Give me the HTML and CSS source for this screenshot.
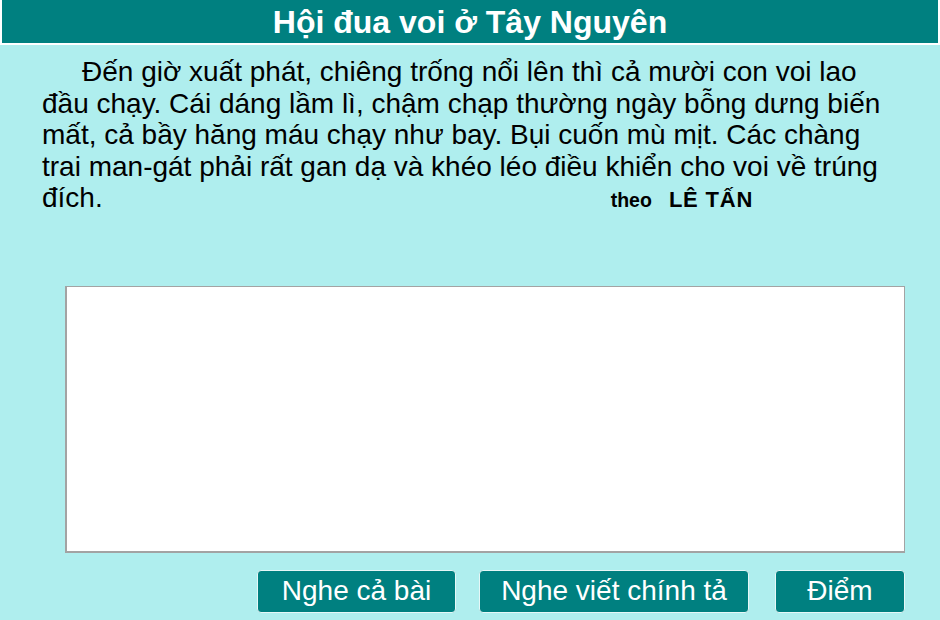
FILE: index.html
```html
<!DOCTYPE html>
<html lang="vi">
<head>
<meta charset="utf-8">
<title>Hội đua voi ở Tây Nguyên</title>
<link rel="stylesheet" href="styles.css">
</head>
<body>
  <header class="title-bar">
    <h1 class="title">Hội đua voi ở Tây Nguyên</h1>
  </header>

  <main class="lesson">
    <p class="passage">Đến giờ xuất phát, chiêng trống nổi lên thì cả mười con voi lao đầu chạy. Cái dáng lầm lì, chậm chạp thường ngày bỗng dưng biến mất, cả bầy hăng máu chạy như bay. Bụi cuốn mù mịt. Các chàng trai man-gát phải rất gan dạ và khéo léo điều khiển cho voi về trúng đích.<span class="author">theo</span><span class="author-name">LÊ TẤN</span></p>

    <textarea class="answer" aria-label="Bài viết"></textarea>

    <div class="actions">
      <button class="btn btn-all" type="button">Nghe cả bài</button>
      <button class="btn btn-dictate" type="button">Nghe viết chính tả</button>
      <button class="btn btn-score" type="button">Điểm</button>
    </div>
  </main>
</body>
</html>
```

FILE: styles.css
```css
html, body {
  margin: 0;
  padding: 0;
}

body {
  background: #afeeee;
  font-family: "Liberation Sans", Arial, sans-serif;
  color: #000;
  width: 940px;
  height: 620px;
  overflow: hidden;
}

/* Teal banner with the lesson title */
.title-bar {
  background: #008080;
  border: 2px solid #ffffff;
  border-top: none;
  height: 43px;
  display: flex;
  align-items: center;
  justify-content: center;
}

.title {
  margin: 0;
  color: #ffffff;
  font-size: 32px;
  font-weight: bold;
  line-height: 1;
}

.lesson {
  padding: 11px 0 0 42px;
}

.passage {
  margin: 0;
  width: 858px;
  font-size: 28px;
  line-height: 31.5px;
  text-indent: 40px;
}

.author,
.author-name {
  display: inline-block;
  font-weight: bold;
  text-indent: 0;
}

.author {
  font-size: 19.5px;
  margin-left: 508px;
}

.author-name {
  font-size: 22px;
  margin-left: 17px;
  letter-spacing: 0.8px;
}

/* Writing area */
.answer {
  display: block;
  box-sizing: border-box;
  margin: 69px 0 0 23px;
  width: 840px;
  height: 267px;
  background: #ffffff;
  border: 1px solid #a3a3a3;
  border-left-width: 2px;
  border-bottom-width: 2px;
  resize: none;
  padding: 4px;
  font: 24px "Liberation Sans", Arial, sans-serif;
}

.actions {
  display: flex;
  justify-content: flex-end;
  width: 840px;
  margin: 17px 0 0 23px;
}

.btn {
  height: 43px;
  box-sizing: border-box;
  background: #008080;
  color: #ffffff;
  border: 1px solid #e6f7f7;
  border-radius: 4px;
  font-family: "Liberation Sans", Arial, sans-serif;
  font-size: 28px;
  padding: 0;
  cursor: pointer;
}

.btn-all {
  width: 199px;
}

.btn-dictate {
  width: 270px;
  margin-left: 23px;
}

.btn-score {
  width: 130px;
  margin-left: 26px;
}
```
